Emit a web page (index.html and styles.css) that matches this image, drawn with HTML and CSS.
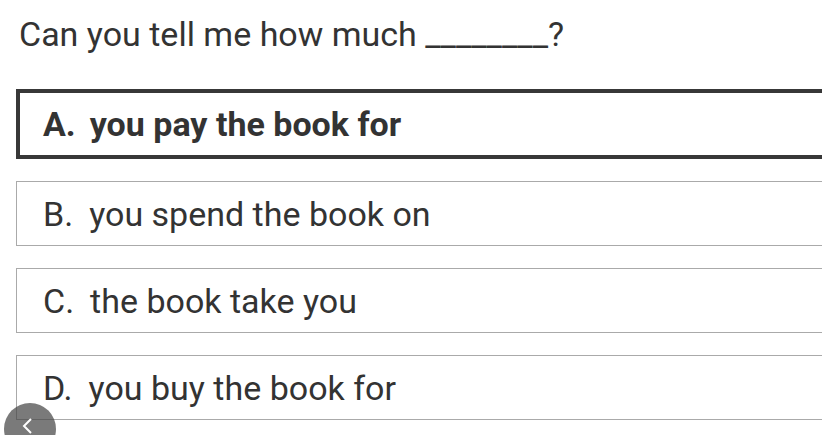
FILE: index.html
```html
<!DOCTYPE html>
<html>
<head>
<meta charset="utf-8">
<link rel="stylesheet" href="styles.css">
</head>
<body>
<div class="page">
  <p class="question">Can you tell me how much ________?</p>
  <div class="options">
    <div class="option selected"><span class="letter">A.</span><span>you pay the book for</span></div>
    <div class="option"><span class="letter">B.</span><span>you spend the book on</span></div>
    <div class="option"><span class="letter">C.</span><span>the book take you</span></div>
    <div class="option"><span class="letter">D.</span><span>you buy the book for</span></div>
  </div>
</div>
<button class="back" aria-label="Back">
  <svg width="20" height="20" viewBox="0 0 20 20"><path d="M13 3 L6 10 L13 17" fill="none" stroke="#fff" stroke-width="2"/></svg>
</button>
</body>
</html>
```
FILE: styles.css
```css
html, body {
  margin: 0;
  padding: 0;
  background: #fff;
  overflow: hidden;
  height: 435px;
}
body {
  font-family: Roboto, "Noto Sans", sans-serif;
  color: #333;
  position: relative;
}
.page {
  padding: 13px 0 0 19px;
}
.question {
  margin: 0;
  font-size: 34px;
  line-height: 42px;
}
.options {
  margin-top: 34px;
  margin-left: -3px;
  width: 900px;
  display: flex;
  flex-direction: column;
  gap: 22px;
}
.option {
  box-sizing: border-box;
  height: 65px;
  border: 1px solid #aaa;
  display: flex;
  align-items: center;
  padding-left: 26px;
  font-size: 34px;
}
.option.selected {
  height: 70px;
  border: 4px solid #383838;
  padding-left: 23px;
  font-weight: bold;
}
.letter {
  margin-right: 16px;
}
.option.selected .letter {
  margin-right: 14px;
}
.back {
  position: absolute;
  left: 4px;
  top: 403px;
  width: 52px;
  height: 52px;
  border-radius: 50%;
  border: none;
  background: rgba(70, 70, 70, 0.72);
  padding: 0;
  display: flex;
  align-items: flex-start;
  justify-content: center;
  padding-top: 13px;
}
.back svg {
  margin-left: -4px;
}
```
